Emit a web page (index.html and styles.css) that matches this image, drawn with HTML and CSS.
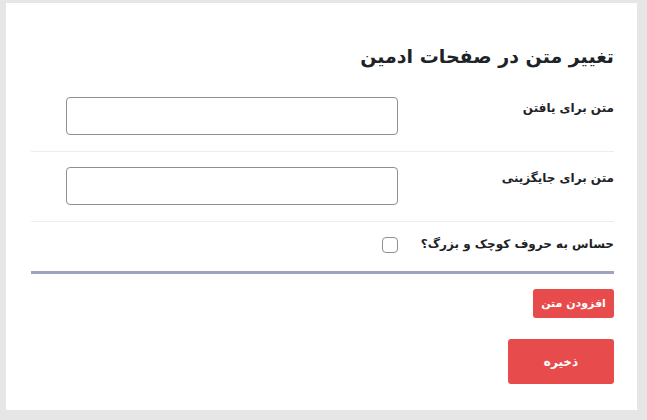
FILE: index.html
```html
<!DOCTYPE html>
<html lang="fa" dir="rtl">
<head>
<meta charset="utf-8">
<link rel="stylesheet" href="styles.css">
</head>
<body>
<div class="card">
  <h1 class="title">تغییر متن در صفحات ادمین</h1>
  <div class="row">
    <label class="label">متن برای یافتن</label>
    <div class="field"><input class="input" type="text"></div>
  </div>
  <div class="row">
    <label class="label">متن برای جایگزینی</label>
    <div class="field"><input class="input" type="text"></div>
  </div>
  <div class="row row-check">
    <label class="label">حساس به حروف کوچک و بزرگ؟</label>
    <div class="field"><span class="checkbox"></span></div>
  </div>
  <div class="divider"></div>
  <div class="actions">
    <button class="btn btn-small">افزودن متن</button>
    <button class="btn btn-save">ذخیره</button>
  </div>
</div>
</body>
</html>
```
FILE: styles.css
```css
html, body { margin: 0; padding: 0; }
body {
  background: #e6e6e6;
  padding: 3px 10px 10px 6px;
  font-family: "DejaVu Sans", sans-serif;
  color: #1d2327;
}
.card {
  background: #fff;
  height: 407px;
  box-sizing: border-box;
  padding: 33px 23px 0 25px;
}
.title {
  margin: 0 0 21px;
  font-size: 19px;
  font-weight: bold;
  line-height: 40px;
  white-space: nowrap;
}
.row {
  display: grid;
  grid-template-columns: 200px 1fr;
  border-bottom: 1px solid #ececec;
  padding: 15px 0 16px;
}
.row:first-of-type { padding-top: 0; }
.label {
  font-size: 12px;
  font-weight: bold;
  line-height: 20px;
  white-space: nowrap;
  padding-top: 1px;
}
.field { padding-right: 16px; }
.input {
  display: block;
  width: 332px;
  height: 38px;
  box-sizing: border-box;
  border: 1px solid #8c8f94;
  border-radius: 4px;
  background: #fff;
  margin: 0;
}
.row-check { border-bottom: none; padding: 12px 0 17px; }
.row-check .label { padding-top: 0; }
.checkbox {
  display: block;
  width: 16px;
  height: 16px;
  box-sizing: border-box;
  border: 1px solid #8c8f94;
  border-radius: 4px;
  margin-top: 3px;
}
.divider { height: 3px; background: #9ea3bf; }
.actions {
  display: flex;
  flex-direction: column;
  align-items: flex-start;
  padding-top: 15px;
  gap: 21px;
}
.btn {
  border: none;
  padding: 0;
  background: #e84b4b;
  color: #fff;
  font-family: inherit;
  font-weight: bold;
  border-radius: 3px;
  white-space: nowrap;
}
.btn-small { width: 81px; height: 29px; font-size: 11px; }
.btn-save { width: 106px; height: 45px; font-size: 12px; }
```
